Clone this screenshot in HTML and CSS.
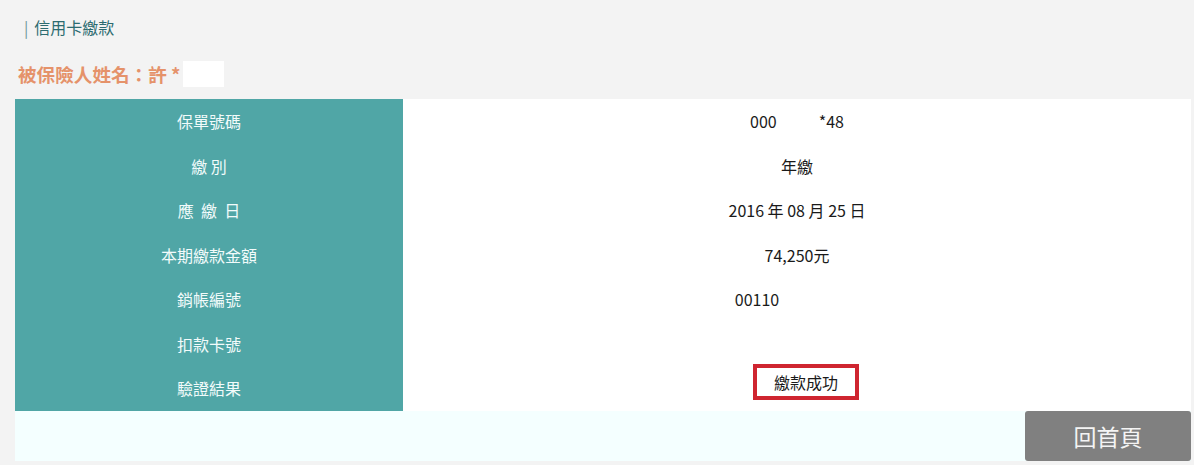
FILE: index.html
```html
<!DOCTYPE html>
<html>
<head>
    <title>信用卡繳款</title>
    <link rel="stylesheet" href="styles.css">
</head>
<body>
    <div class="page">
        <div class="title"><span class="bar">|</span>信用卡繳款</div>
        <div class="insured">被保險人姓名：許 *<span class="mask"></span></div>

        <table class="detail">
            <tr>
                <th>保單號碼</th>
                <td>000<span class="gap"></span>*48</td>
            </tr>
            <tr>
                <th>繳 別</th>
                <td>年繳</td>
            </tr>
            <tr>
                <th>應&nbsp; 繳&nbsp; 日</th>
                <td>2016 年 08 月 25 日</td>
            </tr>
            <tr>
                <th>本期繳款金額</th>
                <td>74,250元</td>
            </tr>
            <tr>
                <th>銷帳編號</th>
                <td>00110<span class="gap wide"></span></td>
            </tr>
            <tr>
                <th>扣款卡號</th>
                <td></td>
            </tr>
            <tr>
                <th>驗證結果</th>
                <td><span class="result">繳款成功</span></td>
            </tr>
        </table>

        <div class="actions">
            <button class="home">回首頁</button>
        </div>
    </div>
</body>
</html>
```

FILE: styles.css
```css
body {
    margin: 0;
    background-color: #f3f3f3;
    font-family: "Noto Sans CJK TC", "Noto Sans", sans-serif;
    color: #222;
}
.page {
    padding: 17px 3px 0 15px;
}
.title {
    padding-left: 9px;
    font-size: 16px;
    line-height: 20px;
    color: #2c6b70;
}
.title .bar {
    margin-right: 6px;
    color: #6c9898;
}
.insured {
    margin-top: 24px;
    padding-left: 3px;
    font-size: 18.6px;
    line-height: 26px;
    font-weight: bold;
    color: #e5926a;
}
.insured .mask {
    display: inline-block;
    vertical-align: top;
    width: 41px;
    height: 26px;
    margin-left: 3px;
    background-color: #fff;
}
.detail {
    width: 1176px;
    margin-top: 12px;
    border-collapse: collapse;
    font-size: 16px;
}
.detail th,
.detail td {
    height: 44.5px;
    padding: 0;
    text-align: center;
    font-weight: normal;
}
.detail th {
    width: 388px;
    background-color: #50a6a6;
    color: #f2fbfb;
}
.detail td {
    background-color: #fff;
    color: #1a1a1a;
}
.gap {
    display: inline-block;
    width: 42px;
}
.gap.wide {
    width: 80px;
}
.result {
    display: inline-block;
    vertical-align: top;
    margin: -4px 0 8px 18px;
    padding: 3px 17px;
    border: 4px solid #cf2530;
    line-height: 22px;
}
.actions {
    display: flex;
    justify-content: flex-end;
    width: 1176px;
    height: 50px;
    background-color: #f4ffff;
}
.home {
    width: 166px;
    height: 50px;
    border: none;
    border-radius: 3px;
    background-color: #808080;
    color: #f4f4f4;
    font-family: "Noto Sans CJK TC", sans-serif;
    font-size: 23px;
}
```
